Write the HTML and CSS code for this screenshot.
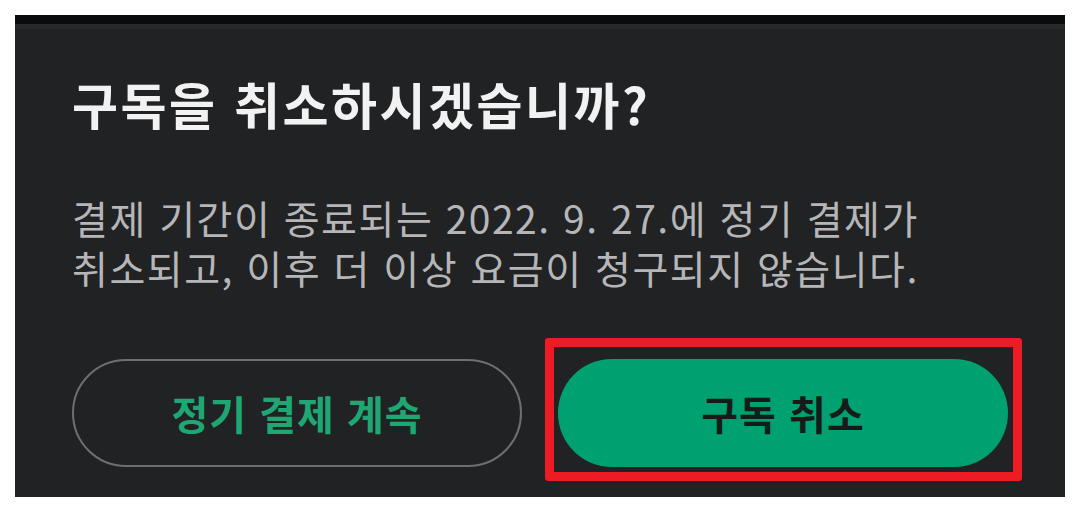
FILE: index.html
```html
<!DOCTYPE html>
<html lang="ko">
<head>
<meta charset="utf-8">
<link rel="stylesheet" href="styles.css">
</head>
<body>
<div class="panel">
  <div class="topbar"></div>
  <div class="topline"></div>
  <div class="content">
    <h1 class="title">구독을 취소하시겠습니까?</h1>
    <div class="desc">
      <p class="desc-line">결제 기간이 종료되는 2022. 9. 27.에 정기 결제가</p>
      <p class="desc-line">취소되고, 이후 더 이상 요금이 청구되지 않습니다.</p>
    </div>
    <div class="actions">
      <button class="btn btn-outline">정기 결제 계속</button>
      <div class="highlight-wrap">
        <button class="btn btn-primary">구독 취소</button>
        <div class="highlight"></div>
      </div>
    </div>
  </div>
</div>
</body>
</html>
```
FILE: styles.css
```css
html, body {
  margin: 0;
  padding: 0;
  background: #ffffff;
}
body {
  width: 1080px;
  height: 512px;
  padding: 15px;
  box-sizing: border-box;
  font-family: "Noto Sans CJK KR", "Noto Sans", sans-serif;
}
.panel {
  width: 1050px;
  height: 482px;
  background: #212224;
  display: flex;
  flex-direction: column;
}
.topbar {
  height: 9px;
  background: #0b0b0c;
}
.topline {
  height: 5px;
  background: #28292b;
}
.content {
  padding: 0 57px;
  display: flex;
  flex-direction: column;
}
.title {
  margin: 44px 0 0 0;
  font-size: 50px;
  line-height: 60px;
  font-weight: 700;
  color: #f2f2f2;
  letter-spacing: 2.5px;
  white-space: nowrap;
}
.desc {
  margin-top: 59px;
  display: flex;
  flex-direction: column;
}
.desc-line {
  margin: 0;
  height: 50px;
  font-size: 39px;
  line-height: 50px;
  font-weight: 400;
  color: #b6b6b8;
  letter-spacing: 1.5px;
  white-space: nowrap;
}
.actions {
  margin-top: 67px;
  display: flex;
  gap: 36px;
}
.btn {
  width: 450px;
  height: 108px;
  border-radius: 54px;
  font-family: "Noto Sans CJK KR", "Noto Sans", sans-serif;
  font-size: 40px;
  font-weight: 700;
  letter-spacing: 1px;
  padding: 0;
  margin: 0;
}
.btn-outline {
  background: transparent;
  border: 2px solid #6f6f71;
  color: #1fa773;
}
.btn-primary {
  background: #00a171;
  border: none;
  color: #131c18;
}
.highlight-wrap {
  position: relative;
  display: flex;
}
.highlight {
  position: absolute;
  left: -13px;
  right: -14px;
  top: -21px;
  bottom: -14px;
  border: 9px solid #ed1c24;
  border-radius: 3px;
  pointer-events: none;
}
```
